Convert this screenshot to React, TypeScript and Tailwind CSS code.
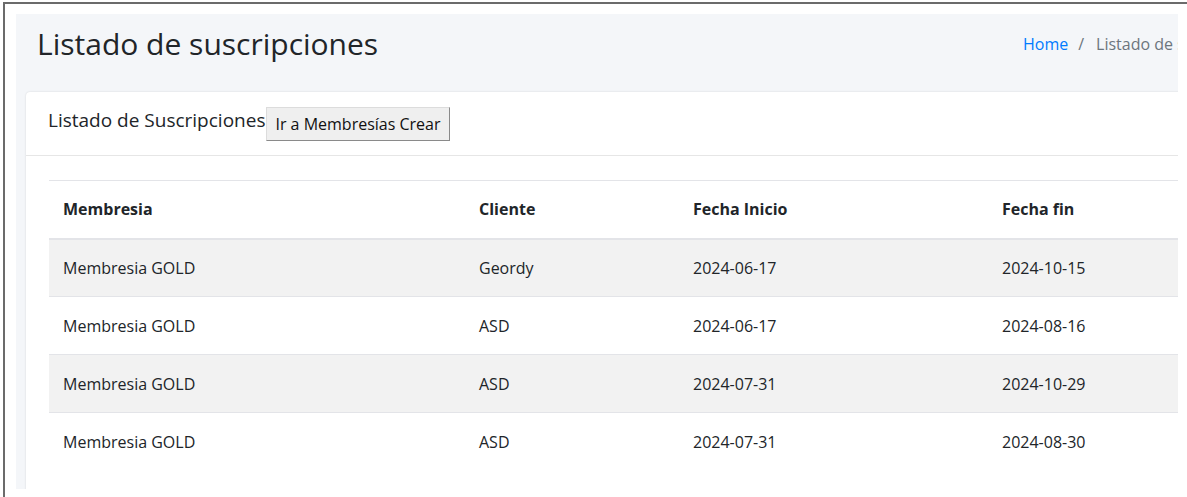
const rows = [
  { membresia: "Membresia GOLD", cliente: "Geordy", inicio: "2024-06-17", fin: "2024-10-15" },
  { membresia: "Membresia GOLD", cliente: "ASD", inicio: "2024-06-17", fin: "2024-08-16" },
  { membresia: "Membresia GOLD", cliente: "ASD", inicio: "2024-07-31", fin: "2024-10-29" },
  { membresia: "Membresia GOLD", cliente: "ASD", inicio: "2024-07-31", fin: "2024-08-30" },
]

export default function App() {
  return (
    <div className="w-[1187px] h-[497px] bg-white overflow-hidden pt-[2px] pl-[3px] font-['Open_Sans',sans-serif] text-[#212529]">
      <div className="h-full border-t-2 border-l-2 border-[#6b6b6b] pt-[10px] pl-[11px]">
        {/* Content wrapper */}
        <div className="w-[1162px] h-[475px] bg-[#f4f6f9] overflow-hidden">
          {/* Content header */}
          <div className="flex items-start pt-[11px] pl-[21px] h-[72px]">
            <h1 className="w-[986px] shrink-0 text-[30px] leading-[38px] text-[#212529]">Listado de suscripciones</h1>
            <div className="whitespace-nowrap text-[16px] leading-[38px]">
              <span className="text-[#007bff]">Home</span>
              <span className="text-[#6c757d] pl-[10px] pr-[12px]">/</span>
              <span className="text-[#6c757d]">Listado de suscripciones</span>
            </div>
          </div>

          {/* Card */}
          <div className="ml-[10px] mt-[6px] w-[1300px] bg-white rounded-tl-[4px] shadow-[0_0_2px_rgba(0,0,0,0.15)]">
            <div className="h-[64px] flex items-center pl-[22px] border-b border-[#e6e6e6]">
              <span className="text-[19px] leading-[20px] pb-[8px]">Listado de Suscripciones</span>
              <button className="ml-[1px] h-[34px] px-[8px] bg-[#efefef] border border-t-[#dcdcdc] border-l-[#dcdcdc] border-r-[#8a8a8a] border-b-[#8a8a8a] text-[16px] text-[#111]">
                Ir a Membresías Crear
              </button>
            </div>

            <div className="pt-[24px] pl-[23px] pb-[20px]">
              <table className="border-collapse text-[16px] w-[1260px]">
                <thead>
                  <tr className="h-[58px] border-t border-b-2 border-[#e3e4e8]">
                    <th className="w-[416px] pl-[14px] text-left font-bold">Membresia</th>
                    <th className="w-[214px] pl-[14px] text-left font-bold">Cliente</th>
                    <th className="w-[309px] pl-[14px] text-left font-bold">Fecha Inicio</th>
                    <th className="pl-[14px] text-left font-bold">Fecha fin</th>
                  </tr>
                </thead>
                <tbody>
                  {rows.map((r, i) => (
                    <tr key={i} className={`h-[58px] border-t border-[#e3e4e8] ${i % 2 === 0 ? "bg-[#f2f2f2]" : "bg-white"}`}>
                      <td className="pl-[14px]">{r.membresia}</td>
                      <td className="pl-[14px]">{r.cliente}</td>
                      <td className="pl-[14px]">{r.inicio}</td>
                      <td className="pl-[14px]">{r.fin}</td>
                    </tr>
                  ))}
                </tbody>
              </table>
            </div>
          </div>
        </div>
      </div>
    </div>
  )
}
